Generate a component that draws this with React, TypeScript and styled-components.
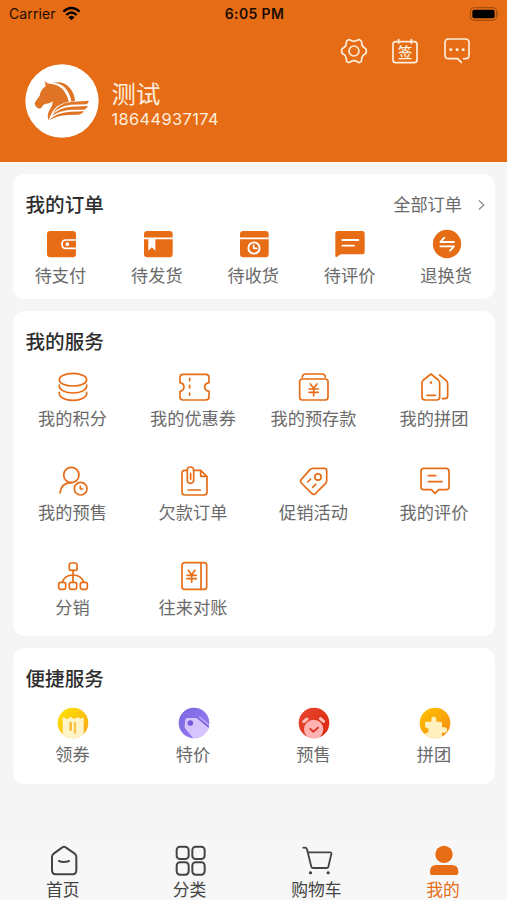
import React from 'react';
import styled, { createGlobalStyle } from 'styled-components';

const ORANGE = '#e66c15';
const CREAM = '#fdeedd';

const GlobalStyle = createGlobalStyle`
  body {
    margin: 0;
    background: #f5f5f5;
  }
  * {
    box-sizing: border-box;
  }
`;

const Screen = styled.div`
  display: flex;
  flex-direction: column;
  width: 507px;
  height: 900px;
  overflow: hidden;
  background: #f5f5f5;
  font-family: 'Inter', 'Noto Sans CJK SC', sans-serif;
`;

const Header = styled.header`
  height: 162px;
  flex: none;
  background: ${ORANGE};
`;

const StatusBar = styled.div`
  display: grid;
  grid-template-columns: 1fr auto 1fr;
  align-items: center;
  height: 27px;
  padding: 0 7px 0 9px;
  color: #1c0d03;
  font-size: 14px;
  line-height: 27px;
`;

const Carrier = styled.div`
  display: flex;
  align-items: center;
  gap: 6px;
  letter-spacing: 0.1px;
`;

const Clock = styled.div`
  font-weight: 600;
  font-size: 14px;
  letter-spacing: 0.35px;
`;

const BatterySlot = styled.div`
  display: flex;
  justify-content: flex-end;
`;

const Actions = styled.div`
  display: flex;
  justify-content: flex-end;
  gap: 19.4px;
  margin-top: 8px;
  padding-right: 34.3px;
`;

const Profile = styled.div`
  display: flex;
  margin-top: -3px;
  padding-left: 25px;
  gap: 12.5px;
`;

const ProfileText = styled.div`
  padding-top: 16px;
  color: ${CREAM};
`;

const UserName = styled.div`
  font-size: 24.4px;
  line-height: 29px;
`;

const Phone = styled.div`
  font-size: 16.4px;
  line-height: 20px;
  letter-spacing: 0.38px;
`;

const Cards = styled.main`
  display: flex;
  flex-direction: column;
  gap: 12px;
  padding: 12px 12px 0 13px;
`;

const Card = styled.section<{ $height: number }>`
  height: ${(p) => p.$height}px;
  padding-top: 15px;
  border-radius: 12px;
  background: #fff;
`;

const CardHead = styled.div`
  display: flex;
  justify-content: space-between;
  align-items: center;
  height: 31px;
  padding: 1px 9px 0 12.5px;
`;

const CardTitle = styled.h2`
  margin: 0;
  color: #2e2e2e;
  font-size: 19.6px;
  font-weight: 500;
  line-height: 30px;
`;

const AllOrders = styled.div`
  display: flex;
  align-items: center;
  gap: 15px;
  color: #6a6a6a;
  font-size: 17.2px;
  line-height: 30px;
`;

const ItemGrid = styled.div<{ $columns: number; $top: number }>`
  display: grid;
  grid-template-columns: repeat(${(p) => p.$columns}, 1fr);
  grid-auto-rows: 94.5px;
  margin-top: ${(p) => p.$top}px;
`;

const Item = styled.div`
  display: flex;
  flex-direction: column;
  align-items: center;
`;

const ItemLabel = styled.span`
  margin: 3px 1.5px 0 0;
  color: #6a6a6a;
  font-size: 17.2px;
  line-height: 25px;
  white-space: nowrap;
`;

const TabBar = styled.nav`
  display: grid;
  grid-template-columns: repeat(4, 1fr);
  height: 60px;
  margin-top: auto;
  padding-top: 4px;
  background: #f7f7f7;
`;

const Tab = styled.div<{ $active?: boolean }>`
  display: flex;
  flex-direction: column;
  align-items: center;
  color: ${(p) => (p.$active ? ORANGE : '#444')};
`;

const TabLabel = styled.span`
  margin: 4px 1px 0 0;
  font-size: 16.8px;
  line-height: 20px;
`;

const IconSvg = styled.svg<{ $color?: string }>`
  display: block;
  flex: none;
  color: ${(p) => p.$color ?? 'inherit'};
`;

type IconProps = { children: React.ReactNode; color?: string; width?: number; filled?: boolean };

const Icon = ({ children, color, width = 5, filled }: IconProps) => (
  <IconSvg
    $color={color}
    width="32"
    height="32"
    viewBox="0 0 96 96"
    fill={filled ? 'currentColor' : 'none'}
    stroke={filled ? 'none' : 'currentColor'}
    strokeWidth={width}
    strokeLinecap="round"
    strokeLinejoin="round"
  >
    {children}
  </IconSvg>
);

const HorseLogo = () => (
  <IconSvg width="74" height="74" viewBox="75 191 222 222">
    <circle cx="186" cy="302" r="110" fill="#fff" />
    <g fill="#df7426">
      <path d="M134 241 Q139 249 149 250 Q179 251 194 275 Q205 292 206 305 Q181 309 166 323 Q153 337 146 360 Q139 344 149 328 Q160 313 157 302 Q151 310 138 310 Q129 312 126 319 Q121 328 113 323 Q102 316 105 306 L119 286 Q122 268 137 258 Z" />
      <path d="M160 247 Q190 241 209 262 Q224 280 225 302 L214 304 Q211 280 195 262 Q182 249 160 247 Z" />
      <path d="M158 340 Q174 310 212 305 L266 301 Q266 309 259 312 L214 313 Q176 317 158 340 Z" />
      <path d="M155 347 Q173 323 213 319 L264 317 Q261 325 252 328 L214 328 Q177 331 155 347 Z" />
      <path d="M146 361 Q166 337 211 334 L252 333 Q247 342 235 343 L203 344 Q173 345 146 361 Z" />
    </g>
  </IconSvg>
);

const WifiIcon = () => (
  <IconSvg width="19" height="15" viewBox="0 0 57 45" fill="none" stroke="#000" strokeWidth="7">
    <path d="M4 17 Q28 -5 53 17" />
    <path d="M13 27 Q28 12 44 27" />
    <path d="M28.500 43 L19 34 Q28.500 25 38 34 Z" fill="#000" stroke="none" />
  </IconSvg>
);

const BatteryIcon = () => (
  <IconSvg width="31" height="14" viewBox="0 0 93 42">
    <rect x="4" y="2" width="79" height="38" rx="11" fill="none" stroke="#9b4a10" strokeWidth="3" />
    <rect x="10" y="8" width="67" height="26" rx="6" fill="#000" />
    <path d="M86 15 Q92 21 86 27 Z" fill="#9b4a10" />
  </IconSvg>
);

const GearIcon = () => (
  <Icon color={CREAM}>
    <path d="M30 15 Q34 12 38 16 Q48 22 58 16 Q62 12 66 15 Q72 18 71 23 Q71 34 79 38 Q86 41 85 48 Q86 55 79 58 Q71 63 71 73 Q72 79 66 82 Q62 84 58 80 Q48 74 38 80 Q34 84 30 82 Q24 79 25 73 Q25 63 17 58 Q10 55 11 48 Q10 41 17 38 Q25 34 25 23 Q24 18 30 15 Z" />
    <circle cx="48" cy="48" r="15" />
  </Icon>
);

const SignIcon = () => (
  <Icon color={CREAM}>
    <rect x="12" y="20" width="72" height="63" rx="8" />
    <path d="M29 14 V25 M67 14 V25" />
    <text
      x="48"
      y="70"
      textAnchor="middle"
      fontSize="44"
      fontWeight="500"
      fill="currentColor"
      stroke="none"
      fontFamily="'Noto Sans CJK SC', sans-serif"
    >
      签
    </text>
  </Icon>
);

const ChatIcon = () => (
  <Icon color={CREAM}>
    <path d="M68 71 H74 Q84 71 84 61 V23 Q84 12 73 12 H23 Q12 12 12 23 V60 Q12 71 23 71 H50 L61 82" />
    <path d="M29 44 H30 M48 44 H49 M66 44 H67" strokeWidth="8.500" />
  </Icon>
);

const Yen = ({ x, y }: { x: number; y: number }) => (
  <path
    d={`M${x - 10} ${y - 18} L${x} ${y - 5} L${x + 10} ${y - 18} M${x} ${y - 5} V${y + 18} M${x - 14} ${y - 3} H${x + 14} M${x - 14} ${y + 7} H${x + 14}`}
  />
);

const orderIcons = {
  wallet: (
    <Icon color={ORANGE} filled>
      <rect x="6" y="9" width="87" height="79" rx="10" />
      <path d="M93 36 H63 Q51 36 51 48.500 Q51 61 63 61 H93" fill="none" stroke="#fff" strokeWidth="5" strokeLinecap="butt" />
      <circle cx="67" cy="48.500" r="5.500" fill="#fff" />
    </Icon>
  ),
  ship: (
    <Icon color={ORANGE} filled>
      <rect x="6" y="9" width="86" height="79" rx="10" />
      <path d="M6 31 H92" stroke="#fff" strokeWidth="5" />
      <path d="M19 31 H40 V68 L29.500 58 L19 68 Z" fill="#fff" />
    </Icon>
  ),
  receive: (
    <Icon color={ORANGE} filled>
      <rect x="6" y="9" width="86" height="79" rx="10" />
      <path d="M6 31 H92" stroke="#fff" strokeWidth="5" />
      <circle cx="48" cy="60" r="17" fill="none" stroke="#fff" strokeWidth="5.500" />
      <path d="M47 51 V61 H57" fill="none" stroke="#fff" strokeWidth="5" />
    </Icon>
  ),
  review: (
    <Icon color={ORANGE} filled>
      <path d="M12 9 H84 Q92 9 92 17 V71 Q92 79 84 79 H20 L8 87 Q4 88 4 83 V17 Q4 9 12 9 Z" />
      <path d="M25 36 H73 M25 53 H60" stroke="#fff" strokeWidth="5.500" />
    </Icon>
  ),
  exchange: (
    <Icon color={ORANGE} filled>
      <circle cx="48" cy="48" r="42.500" />
      <path d="M40 29 L28 42 H69 M69 55 H28 M69 55 L57 68" fill="none" stroke="#fff" strokeWidth="5.500" />
    </Icon>
  ),
};

const serviceIcons = {
  points: (
    <Icon color={ORANGE}>
      <ellipse cx="48" cy="26" rx="41" ry="19" />
      <path d="M7 42 C5 57 25 66 48 66 S91 57 89 42" />
      <path d="M7 64 C5 79 25 88 48 88 S91 79 89 64" />
    </Icon>
  ),
  coupon: (
    <Icon color={ORANGE}>
      <path d="M15 10 H83 Q93 10 93 20 V35 Q80 38 80 48 Q80 58 93 61 V78 Q93 87 83 87 H15 Q6 87 6 78 V61 Q18 58 18 48 Q18 38 6 35 V20 Q6 10 15 10 Z" />
      <path d="M35 22 V29 M35 43 V51 M35 66 V73" />
    </Icon>
  ),
  deposit: (
    <Icon color={ORANGE}>
      <rect x="5" y="24" width="85" height="63" rx="8" />
      <path d="M13 19 Q13 9 23 9 H72 Q82 9 82 19" />
      <Yen x={47} y={57} />
    </Icon>
  ),
  group: (
    <Icon color={ORANGE}>
      <path d="M36 9 L58 27 Q62 31 62 36 V78 Q62 87 53 87 H18 Q9 87 9 78 V36 Q9 31 13 27 Z" />
      <path d="M62 12 L82 29 Q86 33 86 38 V75 Q86 83 77 83 H70" />
      <path d="M36 34 V35" strokeWidth="7" />
      <path d="M24 73 H49" />
    </Icon>
  ),
  presale: (
    <Icon color={ORANGE}>
      <circle cx="43" cy="30" r="23" />
      <path d="M9 84 Q12 54 43 53" />
      <circle cx="71" cy="71" r="19" />
      <path d="M70 64 V72 H77" />
    </Icon>
  ),
  arrears: (
    <Icon color={ORANGE}>
      <path d="M27 16 H20 Q12 16 12 24 V82 Q12 90 20 90 H79 Q87 90 87 82 V35 L68 16 H47" />
      <path d="M68 17 V34 H86" />
      <path d="M38 25 V43 M28 20 V46 Q28 55 37 55 Q47 55 47 46 V15 Q47 6 37 6 Q28 6 28 15 Z" />
      <path d="M30 75 H67" />
    </Icon>
  ),
  promo: (
    <Icon color={ORANGE}>
      <path d="M45 10 H79 Q86 10 86 17 V47 Q86 52 82 56 L53 85 Q47 91 41 85 L10 54 Q5 48 10 43 L36 14 Q40 10 45 10 Z" />
      <circle cx="60" cy="36" r="9.500" />
      <path d="M29 51 L38 42 M44 67 L53 58" />
    </Icon>
  ),
  review: (
    <Icon color={ORANGE}>
      <path d="M14 10 H81 Q90 10 90 19 V65 Q90 74 81 74 H59 L48 85 L37 74 H14 Q6 74 6 65 V19 Q6 10 14 10 Z" />
      <path d="M28 32 H50 M28 50 H69" />
    </Icon>
  ),
  distribution: (
    <Icon color={ORANGE}>
      <rect x="37" y="9" width="23" height="22" rx="5" />
      <rect x="5" y="67" width="21" height="21" rx="6" />
      <rect x="37" y="67" width="22" height="21" rx="6" />
      <rect x="70" y="67" width="21" height="21" rx="6" />
      <path d="M48 31 V67 M16 67 Q23 45 48 45 Q73 45 80 67" />
    </Icon>
  ),
  ledger: (
    <Icon color={ORANGE}>
      <rect x="12" y="8" width="74" height="80" rx="8" />
      <path d="M69 9 V87" />
      <Yen x={41} y={49} />
    </Icon>
  ),
};

const CircleDefs = ({ id, from, to, x1 = 0 }: { id: string; from: string; to: string; x1?: number }) => (
  <defs>
    <linearGradient id={`${id}-fill`} x1={x1} y1="0" x2="1" y2="1">
      <stop offset="0" stopColor={from} />
      <stop offset="1" stopColor={to} />
    </linearGradient>
    <clipPath id={`${id}-clip`}>
      <circle cx="48" cy="48" r="46" />
    </clipPath>
  </defs>
);

const quickIcons = {
  coupon: (
    <Icon filled>
      <CircleDefs id="quick-coupon" from="#ffe600" to="#f9a51a" />
      <circle cx="48" cy="48" r="46" fill="url(#quick-coupon-fill)" />
      <g clipPath="url(#quick-coupon-clip)">
        <path d="M17 32 Q20 29 25 34 Q31 39 36 33 Q41 27 46 33 Q51 38 57 33 Q62 28 67 33 Q73 37 80 31 V96 H17 Z" fill="#fff3c9" />
        <path d="M41 48 V69" stroke="#f7b62d" strokeWidth="7" />
        <path d="M54 48 V77" stroke="#f7c64d" strokeWidth="7" />
      </g>
    </Icon>
  ),
  special: (
    <Icon filled>
      <CircleDefs id="quick-special" from="#7868e0" to="#9c7df2" />
      <circle cx="48" cy="48" r="46" fill="url(#quick-special-fill)" />
      <g clipPath="url(#quick-special-clip)">
        <path d="M28 33 H55 Q60 33 64 37 L96 64 V96 H48 L22 65 Q19 61 20 56 L22 38 Q23 33 28 33 Z" fill="#d6c4fc" />
        <circle cx="37" cy="48" r="8.500" fill="#7459dc" />
        <path d="M58 31 L96 63" stroke="#7c64dd" strokeWidth="5" />
        <path d="M64 30 L95 56" stroke="#cab9fa" strokeWidth="3.500" />
      </g>
    </Icon>
  ),
  presale: (
    <Icon filled>
      <CircleDefs id="quick-presale" from="#e94a31" to="#d9210b" />
      <circle cx="48" cy="48" r="46" fill="url(#quick-presale-fill)" />
      <g clipPath="url(#quick-presale-clip)">
        <path d="M17 44 L27 36 M67 35 L77 43" stroke="#ffc1bc" strokeWidth="9" />
        <circle cx="47" cy="67" r="29" fill="#ffb3b3" />
        <path d="M37 66 L46 74 L60 62" fill="none" stroke="#df3c28" strokeWidth="6" />
      </g>
    </Icon>
  ),
  group: (
    <Icon filled>
      <CircleDefs id="quick-group" from="#ffc400" to="#f58a10" />
      <circle cx="48" cy="48" r="46" fill="url(#quick-group-fill)" />
      <g clipPath="url(#quick-group-clip)">
        <path d="M22 44 H37 V37 Q36 29 44 29 Q52 29 52 37 V44 H64 Q69 44 69 49 V61 H76 Q84 61 84 69 Q84 77 76 77 H69 V96 H18 V79 Q29 79 29 70 Q29 62 18 61 V48 Q18 44 22 44 Z" fill="#fff0bd" />
      </g>
    </Icon>
  ),
};

const tabIcons = {
  home: (
    <Icon width={6}>
      <path d="M56 10 L82 28 Q88 32 88 39 V79 Q88 91 77 91 H26 Q15 91 15 79 V39 Q15 32 21 28 L46 10 Q51 6 56 10 Z" />
      <path d="M36 51 Q50 57 66 51" />
    </Icon>
  ),
  category: (
    <Icon width={6}>
      <rect x="8" y="8" width="36" height="37" rx="10" />
      <rect x="55" y="8" width="37" height="37" rx="10" />
      <rect x="8" y="55" width="36" height="37" rx="10" />
      <rect x="55" y="55" width="37" height="37" rx="10" />
    </Icon>
  ),
  cart: (
    <Icon width={5.5}>
      <path d="M7 11 H11 Q17 11 18 16 L31 68 Q32 72 36 72 H77 Q81 72 82 68 L91 30 Q92 25 87 25 H21" />
      <path d="M28 86 H29 M81 86 H82" strokeWidth="9" />
    </Icon>
  ),
  mine: (
    <Icon filled>
      <circle cx="48" cy="31" r="26" />
      <path d="M25 63 H71 Q90 63 91 82 V87 Q91 93 85 93 H12 Q6 93 6 87 V82 Q7 63 25 63 Z" />
    </Icon>
  ),
};

type Entry = { label: string; icon: React.ReactNode };

const orders: Entry[] = [
  { label: '待支付', icon: orderIcons.wallet },
  { label: '待发货', icon: orderIcons.ship },
  { label: '待收货', icon: orderIcons.receive },
  { label: '待评价', icon: orderIcons.review },
  { label: '退换货', icon: orderIcons.exchange },
];

const services: Entry[] = [
  { label: '我的积分', icon: serviceIcons.points },
  { label: '我的优惠券', icon: serviceIcons.coupon },
  { label: '我的预存款', icon: serviceIcons.deposit },
  { label: '我的拼团', icon: serviceIcons.group },
  { label: '我的预售', icon: serviceIcons.presale },
  { label: '欠款订单', icon: serviceIcons.arrears },
  { label: '促销活动', icon: serviceIcons.promo },
  { label: '我的评价', icon: serviceIcons.review },
  { label: '分销', icon: serviceIcons.distribution },
  { label: '往来对账', icon: serviceIcons.ledger },
];

const quick: Entry[] = [
  { label: '领券', icon: quickIcons.coupon },
  { label: '特价', icon: quickIcons.special },
  { label: '预售', icon: quickIcons.presale },
  { label: '拼团', icon: quickIcons.group },
];

const tabs: Entry[] = [
  { label: '首页', icon: tabIcons.home },
  { label: '分类', icon: tabIcons.category },
  { label: '购物车', icon: tabIcons.cart },
  { label: '我的', icon: tabIcons.mine },
];

const Items = ({ entries, columns, top }: { entries: Entry[]; columns: number; top: number }) => (
  <ItemGrid $columns={columns} $top={top}>
    {entries.map((entry) => (
      <Item key={entry.label}>
        {entry.icon}
        <ItemLabel>{entry.label}</ItemLabel>
      </Item>
    ))}
  </ItemGrid>
);

export default function App() {
  return (
    <Screen>
      <GlobalStyle />
      <Header>
        <StatusBar>
          <Carrier>
            Carrier
            <WifiIcon />
          </Carrier>
          <Clock>6:05 PM</Clock>
          <BatterySlot>
            <BatteryIcon />
          </BatterySlot>
        </StatusBar>
        <Actions>
          <GearIcon />
          <SignIcon />
          <ChatIcon />
        </Actions>
        <Profile>
          <HorseLogo />
          <ProfileText>
            <UserName>测试</UserName>
            <Phone>18644937174</Phone>
          </ProfileText>
        </Profile>
      </Header>
      <Cards>
        <Card $height={124.6}>
          <CardHead>
            <CardTitle>我的订单</CardTitle>
            <AllOrders>
              全部订单
              <IconSvg width="9" height="14" viewBox="0 0 9 14" fill="none" stroke="#888" strokeWidth="1.200">
                <path d="M2 2.500 L6.800 7 L2 11.500" />
              </IconSvg>
            </AllOrders>
          </CardHead>
          <Items entries={orders} columns={5} top={8} />
        </Card>
        <Card $height={325.4}>
          <CardHead>
            <CardTitle>我的服务</CardTitle>
          </CardHead>
          <Items entries={services} columns={4} top={14} />
        </Card>
        <Card $height={136}>
          <CardHead>
            <CardTitle>便捷服务</CardTitle>
          </CardHead>
          <Items entries={quick} columns={4} top={13.5} />
        </Card>
      </Cards>
      <TabBar>
        {tabs.map((tab) => (
          <Tab key={tab.label} $active={tab.label === '我的'}>
            {tab.icon}
            <TabLabel>{tab.label}</TabLabel>
          </Tab>
        ))}
      </TabBar>
    </Screen>
  );
}
